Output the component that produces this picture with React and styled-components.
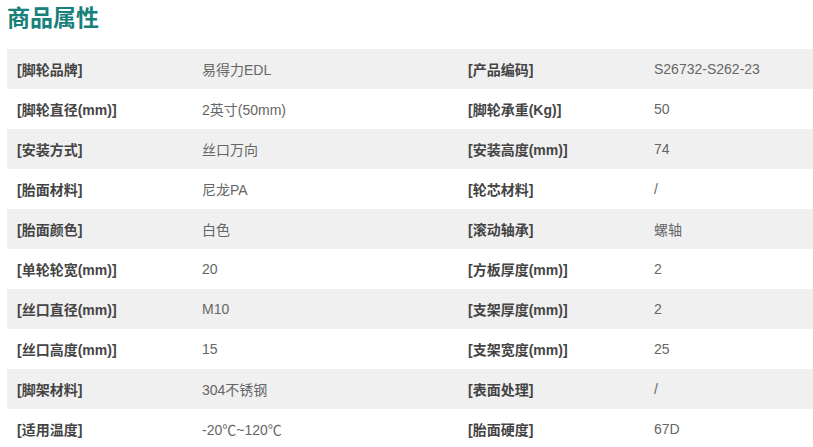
import React from 'react'
import styled, { createGlobalStyle } from 'styled-components'

const GlobalStyle = createGlobalStyle`
  body {
    margin: 0;
    background: #fff;
    font-family: "Liberation Sans", Arial, "Noto Sans CJK SC", sans-serif;
  }
`

const rows = [
    ['脚轮品牌', '易得力EDL', '产品编码', 'S26732-S262-23'],
    ['脚轮直径(mm)', '2英寸(50mm)', '脚轮承重(Kg)', '50'],
    ['安装方式', '丝口万向', '安装高度(mm)', '74'],
    ['胎面材料', '尼龙PA', '轮芯材料', '/'],
    ['胎面颜色', '白色', '滚动轴承', '螺轴'],
    ['单轮轮宽(mm)', '20', '方板厚度(mm)', '2'],
    ['丝口直径(mm)', 'M10', '支架厚度(mm)', '2'],
    ['丝口高度(mm)', '15', '支架宽度(mm)', '25'],
    ['脚架材料', '304不锈钢', '表面处理', '/'],
    ['适用温度', '-20℃~120℃', '胎面硬度', '67D'],
]

function App() {
    return (
        <Page>
            <GlobalStyle />
            <Title>商品属性</Title>
            <Table>
                {rows.map((r, i) => (
                    <Row key={i} $striped={i % 2 === 0}>
                        <Label>[{r[0]}]</Label>
                        <Value>{r[1]}</Value>
                        <Label>[{r[2]}]</Label>
                        <Value>{r[3]}</Value>
                    </Row>
                ))}
            </Table>
        </Page>
    )
}

export default App

const Page = styled.div`
padding: 0 0 0 7px;
`

const Title = styled.h2`
margin: 0;
height: 49px;
padding-top: 2px;
box-sizing: border-box;
font-size: 23px;
line-height: 28px;
font-weight: 700;
color: #17807a;
font-family: "Noto Sans CJK SC", sans-serif;
`

const Table = styled.div`
display: flex;
flex-direction: column;
`

const Row = styled.div`
display: grid;
grid-template-columns: 185px 266px 186px 1fr;
height: 40px;
align-items: center;
background: ${p => p.$striped ? '#f0f0f0' : '#fff'};
font-size: 14px;
`

const Label = styled.div`
padding-left: 10px;
font-weight: 700;
color: #444;
`

const Value = styled.div`
padding-left: 10px;
color: #666;
`
